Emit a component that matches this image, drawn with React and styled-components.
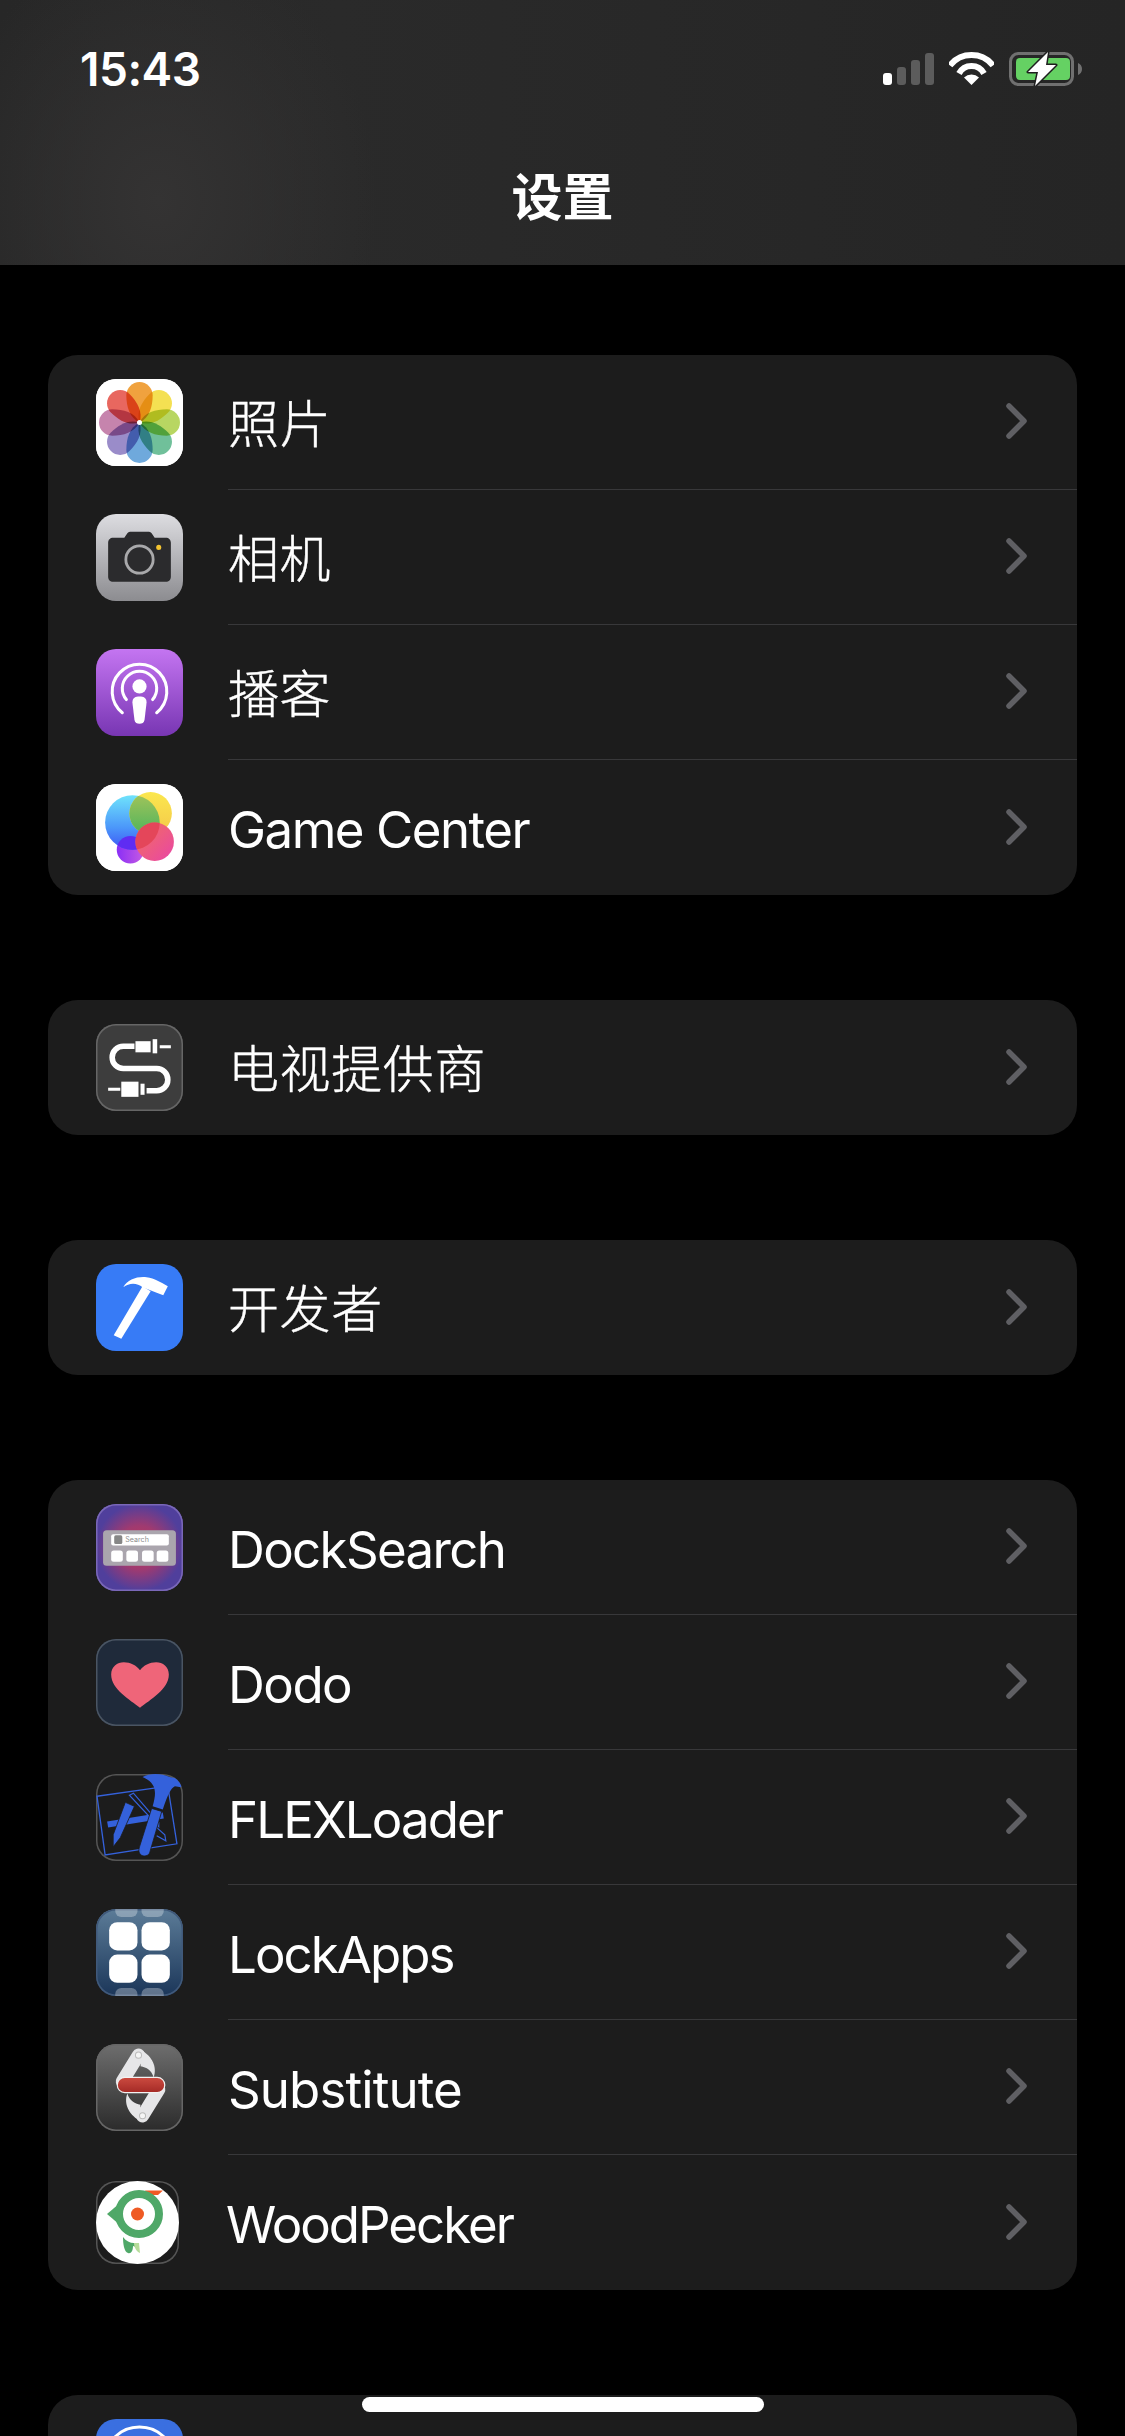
import React from 'react';
import styled, { createGlobalStyle } from 'styled-components';

const GlobalStyle = createGlobalStyle`
  html, body {
    margin: 0;
    padding: 0;
    background: #000;
  }
`;

const Screen = styled.div`
  position: relative;
  width: 1125px;
  height: 2436px;
  overflow: hidden;
  background: #000;
  font-family: Inter, "Noto Sans CJK SC", sans-serif;
  color: #fff;
`;

const Header = styled.header`
  height: 265px;
  display: flex;
  flex-direction: column;
  background:
    radial-gradient(ellipse 220px 260px at 158px 200px, #343333 0%, rgba(52, 51, 51, 0) 100%),
    linear-gradient(90deg, #272727 0%, #2a2a2a 30%, #252525 100%);
`;

const StatusBar = styled.div`
  height: 138px;
  box-sizing: border-box;
  padding: 52px 43px 0 80px;
  display: flex;
  justify-content: space-between;
  align-items: flex-start;
`;

const Time = styled.div`
  font-size: 46px;
  line-height: 34px;
  font-weight: 600;
  letter-spacing: -0.5px;
`;

const StatusIcons = styled.div`
  display: flex;
  align-items: flex-start;
  gap: 15px;
`;

const Signal = styled.div`
  display: flex;
  align-items: flex-end;
  gap: 5px;
  height: 33px;
`;

const SignalBar = styled.span`
  width: 9px;
  height: ${(p) => p.$h}px;
  border-radius: 3px;
  background: ${(p) => (p.$on ? '#fff' : '#5c5c5c')};
`;

const Title = styled.h1`
  margin: 0;
  text-align: center;
  font-size: 51px;
  line-height: 120px;
  font-weight: 700;
`;

const Groups = styled.main`
  display: flex;
  flex-direction: column;
  gap: 105px;
  padding: 90px 48px 0;
`;

const Card = styled.section`
  background: #1c1c1c;
  border-radius: 30px;
  overflow: hidden;
`;

const Row = styled.div`
  height: 135px;
  display: flex;
  align-items: stretch;
  padding-left: 48px;
`;

const IconSlot = styled.div`
  width: 87px;
  margin-right: 45px;
  padding-bottom: 1px;
  box-sizing: border-box;
  flex: none;
  display: flex;
  align-items: center;
`;

const IconFrame = styled.div`
  width: ${(p) => p.$size || 87}px;
  height: ${(p) => p.$size || 87}px;
  border-radius: 20px;
  overflow: hidden;
  box-sizing: border-box;
  background: ${(p) => p.$bg};
  box-shadow: inset 0 0 0 1.5px ${(p) => p.$edge || 'transparent'};
  svg {
    display: block;
    width: 100%;
    height: 100%;
  }
`;

const RowBody = styled.div`
  flex: 1;
  display: flex;
  align-items: center;
  justify-content: space-between;
  padding-right: 50px;
  border-bottom: ${(p) => (p.$last ? 'none' : '1.5px solid #38383a')};
  box-sizing: border-box;
`;

const Label = styled.span`
  font-size: 51px;
  line-height: 60px;
  font-weight: ${(p) => (p.$cjk ? 300 : 400)};
  -webkit-text-stroke: ${(p) => (p.$cjk ? '0.4px #fff' : '0')};
  letter-spacing: ${(p) => (p.$cjk ? 0.6 : p.$track || -1.5)}px;
  margin-left: ${(p) => p.$nudge || 0}px;
  padding-top: 5px;
`;

const Chevron = styled.svg`
  width: 21px;
  height: 36px;
  flex: none;
  margin-top: -2px;
`;

const HomeBar = styled.div`
  position: absolute;
  left: 362px;
  top: 2397px;
  width: 402px;
  height: 15px;
  border-radius: 8px;
  background: #fff;
`;

const Multiply = styled.g`
  mix-blend-mode: multiply;
`;

const Isolated = styled.g`
  isolation: isolate;
`;

const WifiIcon = () => (
  <svg width="45" height="33" viewBox="0 0 45 33" fill="none">
    <path d="M1 13.500A27.300 27.300 0 0 1 44 13.500" stroke="#fff" strokeWidth="6" />
    <path d="M10 21.500A14.200 14.200 0 0 1 35 21.500" stroke="#fff" strokeWidth="6" />
    <path d="M22.500 33L15 25.500A11 11 0 0 1 30 25.500Z" fill="#fff" />
  </svg>
);

const BatteryIcon = () => (
  <svg width="73" height="34" viewBox="0 0 73 34" fill="none">
    <rect x="1.500" y="1.500" width="62" height="31" rx="8" stroke="#707070" strokeWidth="3" />
    <rect x="7" y="6" width="54" height="22" rx="4" fill="#65d163" />
    <path d="M69 11C71.500 12 73 14 73 17C73 20 71.500 22 69 23Z" fill="#707070" />
    <path
      d="M39 0L19 20H29L26 34L47 13H37Z"
      fill="#fff"
      stroke="#1f1f1f"
      strokeWidth="3"
      paintOrder="stroke"
      strokeLinejoin="round"
    />
  </svg>
);

const PETAL = 'M0 0C-10-5-13-16-13-27A13 13 0 0 1 13-27C13-16 10-5 0 0Z';
const PETAL_COLORS = ['#f0a23e', '#f4e052', '#b8d662', '#70c09a', '#6fa9dc', '#9a8cc9', '#c684ad', '#e8675f'];

const PhotosIcon = () => (
  <svg viewBox="0 0 86 86">
    <Isolated>
      <rect width="86" height="86" fill="#fff" />
      {PETAL_COLORS.map((c, i) => (
        <Multiply key={c}>
          <path d={PETAL} fill={c} transform={`translate(43 43) rotate(${i * 45})`} />
        </Multiply>
      ))}
      <circle cx="43" cy="43" r="2.500" fill="#fff" />
    </Isolated>
  </svg>
);

const CameraIcon = () => (
  <svg viewBox="0 0 86 86">
    <path
      d="M17 23.500H28L31 19C32 17.800 33 17.500 35 17.500H51C53 17.500 54 17.800 55 19L58 23.500H69C72 23.500 74 25.500 74 28.500V62C74 65 72 67 69 67H17C14 67 12 65 12 62V28.500C12 25.500 14 23.500 17 23.500Z"
      fill="#2b2b2d"
    />
    <circle cx="43" cy="45" r="13.500" fill="none" stroke="#a9a9ab" strokeWidth="2.800" />
    <circle cx="62" cy="33" r="2.500" fill="#f4c430" />
  </svg>
);

const PodcastIcon = () => (
  <svg viewBox="0 0 86 86" fill="none">
    <path d="M26 63A27 27 0 1 1 60 63" stroke="#fff" strokeWidth="3" strokeLinecap="round" />
    <path d="M30 50A17 17 0 1 1 56 50" stroke="#fff" strokeWidth="3" strokeLinecap="round" />
    <circle cx="43" cy="37" r="7" fill="#fff" />
    <path d="M36 53C36 48 39 47 43 47C47 47 50 48 50 53L48 70C47.500 73 45.500 74 43 74C40.500 74 38.500 73 38 70Z" fill="#fff" />
  </svg>
);

const GameCenterIcon = () => (
  <svg viewBox="0 0 86 86">
    <defs>
      <linearGradient id="gcBlue" x1="0" y1="0" x2="0" y2="1">
        <stop offset="0" stopColor="#6fe3fb" />
        <stop offset="0.6" stopColor="#4b96fa" />
        <stop offset="1" stopColor="#3d55f4" />
      </linearGradient>
      <linearGradient id="gcYellow" x1="0" y1="0" x2="0" y2="1">
        <stop offset="0" stopColor="#fbe74e" />
        <stop offset="1" stopColor="#f4c84a" />
      </linearGradient>
      <linearGradient id="gcGreen" x1="0" y1="0" x2="0" y2="1">
        <stop offset="0" stopColor="#a5c45a" />
        <stop offset="1" stopColor="#4fb45c" />
      </linearGradient>
      <linearGradient id="gcPink" x1="0" y1="0" x2="1" y2="1">
        <stop offset="0" stopColor="#f2725a" />
        <stop offset="1" stopColor="#e945a6" />
      </linearGradient>
      <linearGradient id="gcPurple" x1="0" y1="0" x2="1" y2="0">
        <stop offset="0" stopColor="#8a2ff6" />
        <stop offset="1" stopColor="#c65be2" />
      </linearGradient>
      <clipPath id="gcInBlue">
        <circle cx="36" cy="38" r="27" />
      </clipPath>
    </defs>
    <rect width="86" height="86" fill="#fff" />
    <circle cx="34" cy="65" r="13.500" fill="url(#gcPurple)" />
    <circle cx="36" cy="38" r="27" fill="url(#gcBlue)" />
    <circle cx="34" cy="65" r="13.500" fill="#5f2cf2" clipPath="url(#gcInBlue)" />
    <circle cx="54" cy="29" r="21" fill="url(#gcYellow)" />
    <circle cx="54" cy="29" r="21" fill="url(#gcGreen)" clipPath="url(#gcInBlue)" />
    <circle cx="58" cy="57" r="19" fill="url(#gcPink)" />
    <circle cx="58" cy="57" r="19" fill="#e4465a" clipPath="url(#gcInBlue)" />
  </svg>
);

const CableIcon = () => (
  <svg viewBox="0 0 86 86" fill="none">
    <path d="M38 22H27A11 11 0 0 0 27 44H60A11 11 0 0 1 60 66H50" stroke="#fff" strokeWidth="5.500" />
    <rect x="39" y="17" width="15" height="11" fill="#fff" />
    <rect x="56" y="15" width="4.500" height="14" fill="#fff" />
    <rect x="63" y="21" width="11" height="3" fill="#fff" />
    <rect x="25" y="57" width="17" height="15" fill="#fff" />
    <rect x="44" y="59" width="4" height="11" fill="#fff" />
    <rect x="12" y="63" width="12" height="3" fill="#fff" />
  </svg>
);

const DeveloperIcon = () => (
  <svg viewBox="0 0 86 86" fill="#fff">
    <path d="M17.500 70.500L25 74L54 27L46 22Z" />
    <path d="M27 23C31 15 41 12 50 13C58 14 64 18 71 22L66.500 31L60 28.500L46 23C41 18.500 33 18 27 23Z" />
  </svg>
);

const DockSearchIcon = () => (
  <svg viewBox="0 0 86 86">
    <rect x="7" y="26" width="72" height="35" rx="3.500" fill="#aaa5ad" />
    <rect x="15" y="30" width="57" height="11" rx="2" fill="#fff" />
    <rect x="18" y="31" width="8" height="8.500" rx="1.500" fill="#868686" />
    <text x="29" y="38" fontSize="7" fill="#8c8c8c" fontFamily="Inter, sans-serif">Search</text>
    {[15, 30, 45.500, 60].map((x) => (
      <rect key={x} x={x} y="46" width="11.500" height="11" rx="2.500" fill="#fff" />
    ))}
  </svg>
);

const DodoIcon = () => (
  <svg viewBox="0 0 86 86">
    <path
      d="M43.500 68C34 60 15 50 15 35C15 27.500 21 23 27.500 23C34 23 40 26 43.500 31C47 26 53 23 59.500 23C66 23 72 27.500 72 35C72 50 53 60 43.500 68Z"
      fill="#ef6579"
    />
  </svg>
);

const FlexIcon = () => (
  <svg viewBox="0 0 86 86" fill="none">
    <path d="M1 22L71 12L80 69L9 80Z" stroke="#3461db" strokeWidth="1.300" />
    <path d="M11 47L66 38L67 44L12 53Z" fill="#3461db" />
    <path d="M33 21L37 19L62 48V52Z" stroke="#3461db" strokeWidth="1.200" fill="#1c1c1c" />
    <path d="M59 52L68 60L69 66L60 61" stroke="#3461db" strokeWidth="1.200" />
    <path d="M29 28L38 32L24 63L17 72L17 60Z" fill="#3461db" stroke="#1c1c1c" strokeWidth="0.800" />
    <path d="M55 34L65 37L53 78C52 81 47 82 44.500 80C42 78 42 75 43 72Z" fill="#3461db" stroke="#1c1c1c" strokeWidth="0.800" />
    <path d="M46 3C53 -1 64 -1 73 3L87 6L84 13L78 12C74 14 71 20 66 35L56 32C60 18 60 9 46 3Z" fill="#3461db" />
  </svg>
);

const LockAppsIcon = () => (
  <svg viewBox="0 0 86 86">
    {[19, 45].map((x) => (
      <React.Fragment key={x}>
        <rect x={x} y="-12" width="22" height="20" rx="6" fill="#fff" opacity="0.3" />
        <rect x={x} y="78" width="22" height="20" rx="6" fill="#fff" opacity="0.3" />
      </React.Fragment>
    ))}
    {[13, 45].map((y) =>
      [13, 45].map((x) => <rect key={`${x}-${y}`} x={x} y={y} width="28" height="28" rx="8" fill="#fff" />)
    )}
  </svg>
);

const KnifeArm = () => (
  <g>
    <path d="M42 11L26 37" stroke="#e6e6e8" strokeWidth="13" strokeLinecap="round" />
    <path d="M46 7C55 12 61 23 57 33C55 26 50 23 44 22Z" fill="#e6e6e8" />
    <circle cx="42" cy="11" r="3" fill="#f5f5f5" stroke="#bbb" strokeWidth="1" />
  </g>
);

const SubstituteIcon = () => (
  <svg viewBox="0 0 86 86">
    <defs>
      <linearGradient id="knifeRed" x1="0" y1="0" x2="0" y2="1">
        <stop offset="0" stopColor="#cc4b40" />
        <stop offset="1" stopColor="#a42a26" />
      </linearGradient>
    </defs>
    <KnifeArm />
    <g transform="rotate(180 44 41)">
      <KnifeArm />
    </g>
    <rect x="21" y="33" width="47" height="15" rx="7.500" fill="url(#knifeRed)" stroke="#f2f2f2" strokeWidth="1.200" />
  </svg>
);

const WoodPeckerIcon = () => (
  <svg viewBox="0 0 83 83">
    <circle cx="41.500" cy="41.500" r="41.500" fill="#fff" />
    <path d="M49 9.500H67L62 14H52Z" fill="#ef5a24" />
    <path d="M27 56C30 60 34 62 38 62L43 67L37 65C37 70 35 73 32 72C28 71 27 62 27 56Z" fill="#4fa868" />
    <path d="M38 62H43L44 72C41 71 38 67 38 62Z" fill="#b7dc9a" />
    <path d="M11 33L24 22V44Z" fill="#4fa868" />
    <circle cx="43" cy="33" r="20" fill="#fff" stroke="#4fa868" strokeWidth="8" />
    <circle cx="41.500" cy="33" r="6.500" fill="#ef5a24" />
  </svg>
);

const LastIcon = () => (
  <svg viewBox="0 0 86 86" fill="none">
    <circle cx="43" cy="43" r="35" stroke="#fff" strokeWidth="3" />
  </svg>
);

const groups = [
  [
    { label: '照片', cjk: true, icon: <PhotosIcon />, bg: '#fff' },
    { label: '相机', cjk: true, icon: <CameraIcon />, bg: 'linear-gradient(#dddde1, #8c8c90)' },
    { label: '播客', cjk: true, icon: <PodcastIcon />, bg: 'linear-gradient(#c475f1, #7836b3)' },
    { label: 'Game Center', icon: <GameCenterIcon />, bg: '#fff' },
  ],
  [{ label: '电视提供商', cjk: true, icon: <CableIcon />, bg: '#3d3d3d', edge: '#666' }],
  [{ label: '开发者', cjk: true, icon: <DeveloperIcon />, bg: '#377bf6' }],
  [
    {
      label: 'DockSearch',
      track: -1.65,
      icon: <DockSearchIcon />,
      bg: 'radial-gradient(ellipse 50% 50% at 50% 50%, #c1365a 0%, #a03a70 50%, #503f9c 100%)',
      edge: '#7a68b8',
    },
    { label: 'Dodo', track: -1.5, icon: <DodoIcon />, bg: '#1f2a3a', edge: '#4a5563' },
    { label: 'FLEXLoader', track: -1.9, icon: <FlexIcon />, bg: '#1c1c1c', edge: '#555' },
    { label: 'LockApps', track: -1.95, icon: <LockAppsIcon />, bg: 'linear-gradient(#5c7c98, #1b3659)', edge: '#40597a' },
    { label: 'Substitute', track: -0.9, icon: <SubstituteIcon />, bg: 'linear-gradient(#6e6e6e, #2b2b2b)', edge: '#666' },
    { label: 'WoodPecker', track: -2, icon: <WoodPeckerIcon />, bg: '#1c1c1c', edge: '#555', size: 83, nudge: -2 },
  ],
  [{ label: '', icon: <LastIcon />, bg: '#3a6fe0' }],
];

function SettingsRow({ item, last }) {
  return (
    <Row>
      <IconSlot>
        <IconFrame $bg={item.bg} $edge={item.edge} $size={item.size}>
          {item.icon}
        </IconFrame>
      </IconSlot>
      <RowBody $last={last}>
        <Label $cjk={item.cjk} $nudge={item.nudge} $track={item.track}>
          {item.label}
        </Label>
        <Chevron viewBox="0 0 21 36" fill="none">
          <path d="M3 3L18 18L3 33" stroke="#5f5f63" strokeWidth="5.500" strokeLinecap="round" strokeLinejoin="round" />
        </Chevron>
      </RowBody>
    </Row>
  );
}

export default function App() {
  return (
    <>
      <GlobalStyle />
      <Screen>
        <Header>
          <StatusBar>
            <Time>15:43</Time>
            <StatusIcons>
              <Signal>
                <SignalBar $h={12} $on />
                <SignalBar $h={18} />
                <SignalBar $h={25} />
                <SignalBar $h={32} />
              </Signal>
              <WifiIcon />
              <BatteryIcon />
            </StatusIcons>
          </StatusBar>
          <Title>设置</Title>
        </Header>
        <Groups>
          {groups.map((group, i) => (
            <Card key={i}>
              {group.map((item, j) => (
                <SettingsRow key={j} item={item} last={j === group.length - 1} />
              ))}
            </Card>
          ))}
        </Groups>
        <HomeBar />
      </Screen>
    </>
  );
}
